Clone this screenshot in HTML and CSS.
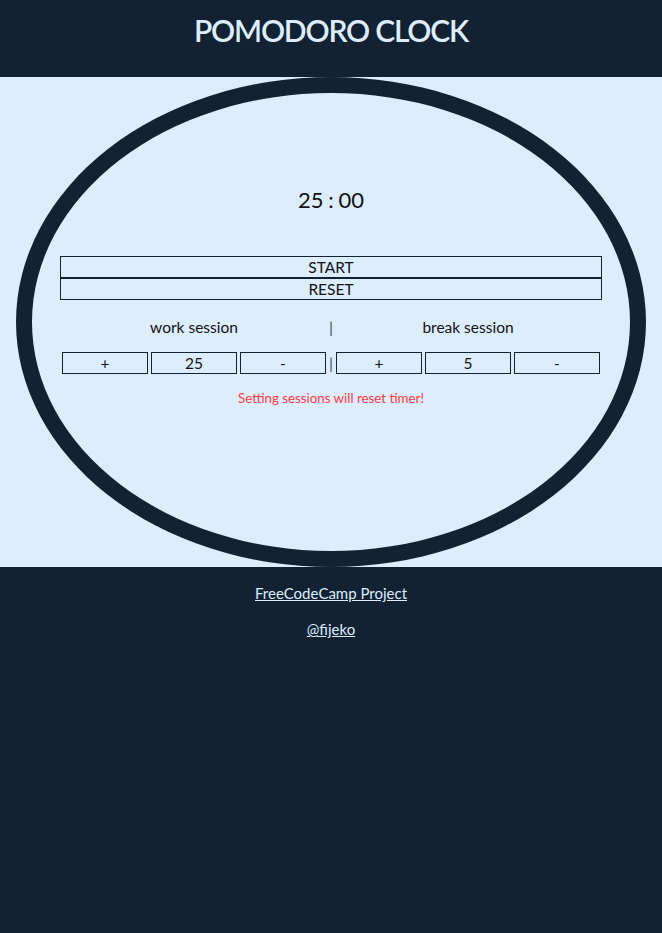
FILE: index.html
```html
<!DOCTYPE html>
<html lang="en">
<head>
<meta charset="utf-8">
<title>Pomodoro Clock</title>
<link rel="stylesheet" href="styles.css">
</head>
<body>
<header class="top">
  <h1 class="title">POMODORO CLOCK</h1>
</header>
<main class="stage">
  <div class="clock">
    <div class="timer">25 : 00</div>
    <div class="controls">
      <button class="ctl">START</button>
      <button class="ctl">RESET</button>
    </div>
    <div class="labels">
      <span class="label">work session</span>
      <span class="sep">|</span>
      <span class="label">break session</span>
    </div>
    <div class="setters">
      <div class="group">
        <button class="btn">+</button>
        <button class="btn">25</button>
        <button class="btn">-</button>
      </div>
      <span class="sep">|</span>
      <div class="group">
        <button class="btn">+</button>
        <button class="btn">5</button>
        <button class="btn">-</button>
      </div>
    </div>
    <p class="warn">Setting sessions will reset timer!</p>
  </div>
</main>
<footer class="foot">
  <p class="line"><a href="#" class="link">FreeCodeCamp Project</a></p>
  <p class="line"><a href="#" class="link">@fijeko</a></p>
</footer>
</body>
</html>
```
FILE: styles.css
```css
html, body {
  margin: 0;
  padding: 0;
  background: #122233;
  font-family: Lato, "Liberation Sans", sans-serif;
}
.top {
  height: 77px;
  display: flex;
  justify-content: center;
  align-items: flex-start;
}
.title {
  margin: 0;
  padding-top: 12px;
  font-size: 30px;
  line-height: 36px;
  font-weight: 600;
  color: #dcedfe;
  letter-spacing: -1.2px;
}
.stage {
  height: 490px;
  background: #dcedfe;
  display: flex;
  justify-content: center;
}
.clock {
  box-sizing: border-box;
  width: 630px;
  height: 490px;
  border: 16px solid #122233;
  border-radius: 50%;
  padding: 0 28px;
  display: flex;
  flex-direction: column;
  align-items: center;
}
.timer {
  margin-top: 92px;
  font-size: 22px;
  line-height: 30px;
  word-spacing: -1px;
  color: #111;
}
.controls {
  margin-top: 41px;
  width: 542px;
  display: flex;
  flex-direction: column;
}
.ctl, .btn {
  box-sizing: border-box;
  height: 22px;
  padding: 0;
  margin: 0;
  background: transparent;
  border: 1px solid #122233;
  font-family: inherit;
  font-size: 15.5px;
  line-height: 20px;
  color: #111;
}
.labels, .setters {
  width: 538px;
  display: grid;
  grid-template-columns: 264px 10px 264px;
  align-items: center;
}
.labels {
  margin-top: 17px;
  font-size: 15.5px;
  line-height: 20px;
  color: #111;
}
.label { text-align: center; }
.sep {
  text-align: center;
  color: #4a4f55;
  font-size: 16px;
  line-height: 20px;
}
.setters { margin-top: 15px; }
.group {
  display: grid;
  grid-template-columns: repeat(3, 86px);
  gap: 3px;
}
.warn {
  margin: 16px 0 0;
  font-size: 13.3px;
  line-height: 16px;
  color: #ff3b3b;
}
.foot {
  display: flex;
  flex-direction: column;
  align-items: center;
  padding-top: 16px;
}
.line {
  margin: 0 0 16px;
  font-size: 15px;
  line-height: 20px;
}
.link { color: #dcedfe; }
```
